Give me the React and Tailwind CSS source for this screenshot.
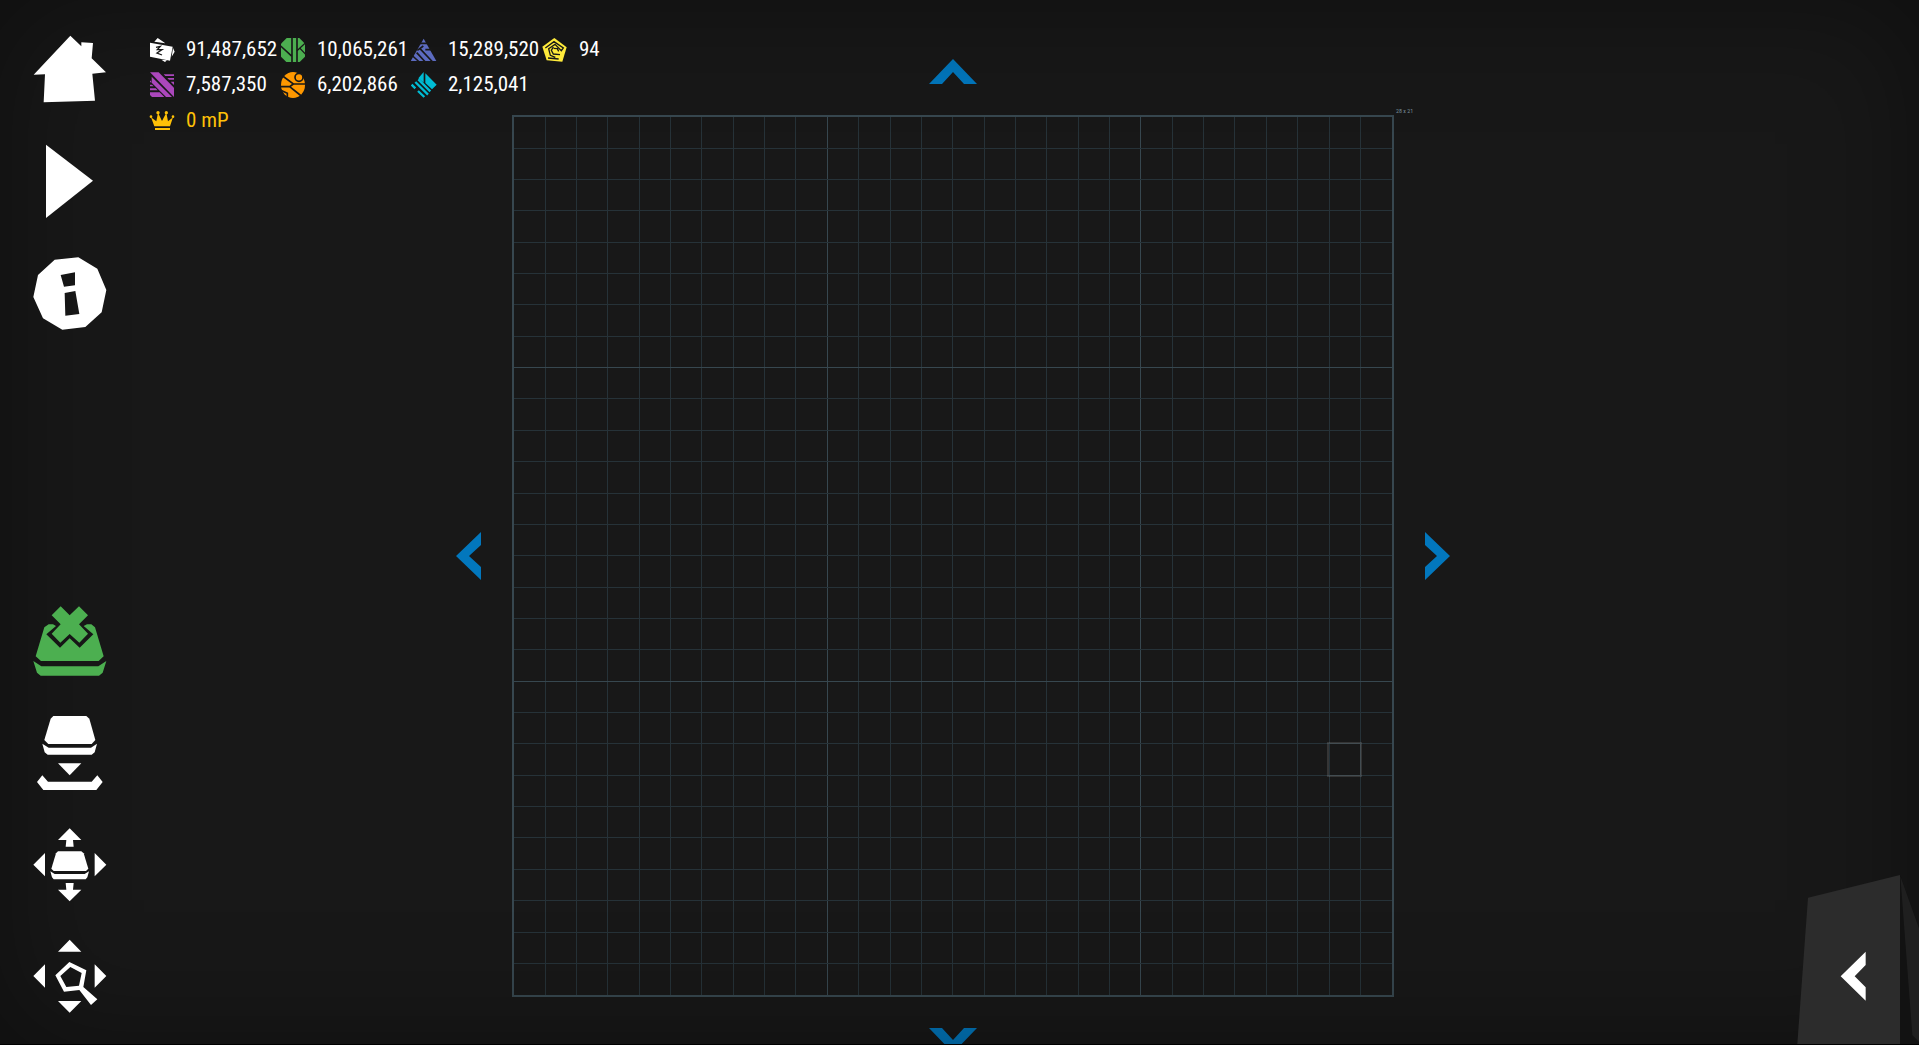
import React, { useState } from 'react';

const CELLS = 28;
const BG = '#181818';

// Resource icons
const BillsIcon = () => (
    <svg className="size-[26px] shrink-0" viewBox="27 33 78 78" aria-hidden="true">
        <path fill="#fff" d="M43 47L53 36L76 52Z M99 66L104 77L95 92Z M64 101L75 108L81 103Z" />
        <path fill="#fff" d="M30 50L98 62L90 104L30 92Z" />
        <path fill="none" stroke={BG} strokeWidth="4" d="M48 64L61 61L52 71L66 71L51 81L66 87" />
    </svg>
);

const VectorIcon = () => (
    <svg className="size-[26px] shrink-0" viewBox="420 33 78 78" aria-hidden="true">
        <path fill="#4caf50" d="M440 36H478L495 53V92L479 108H439L423 92V53Z" />
        <path fill="none" stroke={BG} strokeWidth="5" d="M456 33V111M471 33V111M422 60L456 91" />
        <path fill="none" stroke={BG} strokeWidth="4" d="M471 74L497 50M480 67L497 85" />
    </svg>
);

const ScalarIcon = () => (
    <svg className="size-[26px] shrink-0" viewBox="123 33 78 78" aria-hidden="true">
        <path fill="#5c6bc0" d="M161 38L199 105H122Z" />
        <path fill="none" stroke={BG} strokeWidth="5" d="M148 52H172M142 73L160 60M166 71H186M140 80L166 108M150 68L188 108M128 90L148 108" />
    </svg>
);

const SpiralIcon = () => (
    <svg className="size-[26px] shrink-0" viewBox="516 33 78 78" aria-hidden="true">
        <path fill="#ffeb3b" d="M553 36L590 64L577 107L530 103L517 62Z" />
        <path fill="none" stroke={BG} strokeWidth="4" d="M526 66L552 47L580 66L574 74L555 55L536 68L541 88L556 94M551 67L562 68L566 76M550 63L544 73L550 84L570 86M534 96L566 99" />
    </svg>
);

const TensorIcon = () => (
    <svg className="size-[26px] shrink-0" viewBox="27 138 78 78" aria-hidden="true">
        <g fill="#ab47bc">
            <path d="M30 139H56L102 185V213Z" />
            <path d="M35 152L96 213H78L35 170Z" />
            <path d="M71 145H102V150H76Z M82 156H102V161H87Z M92 167H102V177Z" />
            <path d="M30 163V169H35Z M30 176H36L41 181H30Z M30 187H47L53 193H30Z M30 199H59L73 213H36L30 207Z" />
        </g>
    </svg>
);

const CircuitIcon = () => (
    <svg className="size-[26px] shrink-0" viewBox="420 138 78 78" aria-hidden="true">
        <ellipse cx="459" cy="177" rx="36" ry="39" fill="#ff9800" />
        <circle cx="477" cy="154" r="12" fill="#ff9800" stroke={BG} strokeWidth="5" />
        <path fill="none" stroke={BG} strokeWidth="5" d="M428 150L460 174H498M460 174L449 182H421M449 182L484 210M421 192L442 202V216" />
    </svg>
);

const PrismIcon = () => (
    <svg className="size-[26px] shrink-0" viewBox="123 138 78 78" aria-hidden="true">
        <path fill="#00bcd4" d="M161 138V170L145 157Z M166 142L200 176L186 190L166 171Z" />
        <path fill="none" stroke="#00bcd4" strokeWidth="7" d="M145 160L181 196M136 168L174 206M125 176L136 187M144 195L163 213" />
    </svg>
);

const CrownIcon = () => (
    <svg className="size-[26px] shrink-0" viewBox="27 243 78 78" aria-hidden="true">
        <path fill="#ffc107" d="M43 298L33 271L49 283L54 257L66 282L79 257L84 283L99 271L90 298Z M45 303H90V309H45Z" />
        <g fill="#ffc107">
            <circle cx="33" cy="269" r="4" />
            <circle cx="54" cy="257" r="5" />
            <circle cx="79" cy="257" r="5" />
            <circle cx="99" cy="269" r="4" />
        </g>
    </svg>
);

const resources = [
    { name: 'Bits', value: '91,487,652', Icon: BillsIcon },
    { name: 'Vectors', value: '10,065,261', Icon: VectorIcon },
    { name: 'Scalars', value: '15,289,520', Icon: ScalarIcon },
    { name: 'Spirals', value: '94', Icon: SpiralIcon },
    { name: 'Tensors', value: '7,587,350', Icon: TensorIcon },
    { name: 'Circuits', value: '6,202,866', Icon: CircuitIcon },
    { name: 'Prisms', value: '2,125,041', Icon: PrismIcon },
];

function Resources() {
    return (
        <div className="absolute left-[149px] top-8 z-20 flex flex-col gap-px text-[21px] leading-[35px] text-white font-['Roboto_Condensed','Liberation_Sans_Narrow',Roboto,sans-serif]">
            <ul className="grid grid-cols-[repeat(4,131px)]">
                {resources.map(({ name, value, Icon }) => (
                    <li key={name} title={name} className="flex h-[35px] items-center gap-[11px] whitespace-nowrap">
                        <Icon />
                        <span>{value}</span>
                    </li>
                ))}
            </ul>
            <div className="flex h-[35px] items-center gap-[11px] text-[#ffc107]">
                <CrownIcon />
                <span>0 mP</span>
            </div>
        </div>
    );
}

// Sidebar buttons
function ToolButton({ label, viewBox, color = '#fff', onClick, children }) {
    return (
        <button type="button" aria-label={label} onClick={onClick} className="size-20 cursor-pointer">
            <svg className="size-full" viewBox={viewBox} fill={color}>
                {children}
            </svg>
        </button>
    );
}

function Sidebar({ removing, onToggleRemove }) {
    return (
        <nav className="relative z-20 flex w-[140px] shrink-0 flex-col items-center justify-between pt-[30px] pb-[27px]">
            <div className="flex flex-col gap-8">
                <ToolButton label="Home" viewBox="90 60 240 240">
                    <path d="M211 77L244 109V97L279 99L275 145L318 187L277 191L285 272L131 277L135 193L101 194Z" />
                </ToolButton>
                <ToolButton label="Play" viewBox="90 396 240 240">
                    <path d="M138 404L279 512L138 624Z" />
                </ToolButton>
                <ToolButton label="Info" viewBox="90 732 240 240">
                    <path
                        fillRule="evenodd"
                        d="M164 749L235 742L292 776L319 840L305 907L256 951L187 959L129 925L100 861L114 795Z M182 795L225 787V826L192 830Z M194 849L226 843L238 912L196 917Z"
                    />
                </ToolButton>
            </div>
            <div className="flex flex-col gap-8">
                <ToolButton
                    label="Remove"
                    viewBox="90 33 240 240"
                    color={removing ? '#4caf50' : '#fff'}
                    onClick={onToggleRemove}
                >
                    <path d="M182 49L209 76L237 49L264 76L237 103L264 131L238 158L209 132L181 158L155 131L182 103L155 76Z" />
                    <path d="M146 103H159L168 108L139 133L180 173L209 145L239 173L280 133L251 108L261 103H274L285 112L311 199L296 213H123L107 199L133 112Z" />
                    <path d="M100 213L124 229H295L319 213L308 248L297 257H122L111 248Z" />
                </ToolButton>
                <ToolButton label="Place" viewBox="90 369 240 240">
                    <path d="M160 378H259L268 386L286 450L275 462H145L133 450L152 386Z" />
                    <path d="M127 461L146 473H273L291 461L284 487L275 494H143L134 487Z" />
                    <path d="M174 520H244L209 556Z" />
                    <path d="M127 556L144 575H275L292 556L308 576L289 600H130L111 576Z" />
                </ToolButton>
                <ToolButton label="Move" viewBox="90 45 240 240">
                    <path d="M209 55L244 90H219L221 110H197L199 90H174Z" />
                    <path d="M209 274L244 239H219L221 219H197L199 239H174Z" />
                    <path d="M100 164L135 129V199Z M319 164L284 129V199Z" />
                    <path d="M174 124H244L251 130L265 176L258 183H161L154 176L168 130Z" />
                    <path d="M151 184L164 192H254L267 184L262 202L257 208H161L156 202Z" />
                </ToolButton>
                <ToolButton label="Zoom" viewBox="90 381 240 240">
                    <path d="M209 389L244 425H174Z M209 608L244 573H174Z" />
                    <path d="M100 498L135 463V533Z M319 498L284 463V533Z" />
                    <path
                        fillRule="evenodd"
                        d="M208 456L259 481L250 531L292 568L273 585L238 540L192 545L166 496Z M211 471L181 498L199 531L237 527L245 489Z"
                    />
                </ToolButton>
            </div>
        </nav>
    );
}

// Blue arrows around the field
const arrows = {
    up: { size: 'h-[25px] w-12', viewBox: '0 0 48 25', d: 'M24 0L48 25H35L24 13L13 25H0Z' },
    down: { size: 'h-[25px] w-12', viewBox: '0 0 48 25', d: 'M24 25L48 0H35L24 12L13 0H0Z' },
    left: { size: 'h-12 w-[25px]', viewBox: '0 0 25 48', d: 'M0 24L25 0V13L13 24L25 35V48Z' },
    right: { size: 'h-12 w-[25px]', viewBox: '0 0 25 48', d: 'M25 24L0 0V13L12 24L0 35V48Z' },
};

function Arrow({ direction }) {
    const { size, viewBox, d } = arrows[direction];

    return (
        <button type="button" aria-label={`Expand ${direction}`} className="shrink-0 cursor-pointer">
            <svg className={size} viewBox={viewBox}>
                <path fill="#0277bd" d={d} />
            </svg>
        </button>
    );
}

function Field() {
    const lines = Array.from({ length: CELLS - 1 }, (_, i) => i + 1);
    const pos = (i) => Math.round((i * 878) / CELLS + 1.25) + 0.5;

    return (
        <div className="relative aspect-square h-[calc(100vh-163px)] shrink-0">
            <svg className="size-full" viewBox="0 0 882 882" fill="none" shapeRendering="crispEdges">
                {lines.map((i) => (
                    <path key={`v${i}`} stroke={i % 10 === 0 ? '#37474f' : '#263238'} d={`M${pos(i)} 0V882`} />
                ))}
                {/* rows are counted from the bottom */}
                {lines.map((i) => (
                    <path key={`h${i}`} stroke={(CELLS - i) % 10 === 0 ? '#37474f' : '#263238'} d={`M0 ${pos(i)}H882`} />
                ))}
                <rect x="1" y="1" width="880" height="880" stroke="#37474f" strokeWidth="2" />
                <rect x="816" y="628" width="33" height="33" stroke="#fff" strokeOpacity="0.13" strokeWidth="2" />
            </svg>
            <span className="absolute bottom-full left-full whitespace-nowrap pl-0.5 text-[6px] leading-[8px] text-[#78909c] font-['Roboto_Condensed',Roboto,sans-serif]">
                28 x 21
            </span>
        </div>
    );
}

function App() {
    const [removing, setRemoving] = useState(true);
    const [panelOpen, setPanelOpen] = useState(false);

    return (
        <div className="relative flex h-screen overflow-hidden border-b border-black bg-[#181818]">
            <Sidebar removing={removing} onToggleRemove={() => setRemoving(!removing)} />
            <Resources />

            <main className="flex min-w-0 flex-1 flex-col items-center gap-[31px] pt-[59px] pr-[153px]">
                <Arrow direction="up" />
                <div className="flex items-center gap-[31px]">
                    <Arrow direction="left" />
                    <Field />
                    <Arrow direction="right" />
                </div>
                <Arrow direction="down" />
            </main>

            {/* Vignette */}
            <div className="pointer-events-none absolute inset-0 z-10 shadow-[inset_0_0_120px_rgba(0,0,0,0.4)]" />

            <button
                type="button"
                aria-label="Open panel"
                aria-expanded={panelOpen}
                onClick={() => setPanelOpen(!panelOpen)}
                className="absolute right-0 bottom-0 z-20 cursor-pointer"
            >
                <svg className="h-[169px] w-[122px]" viewBox="231 75 366 507">
                    <path fill="#121212" d="M540 75L597 235V582H540Z" />
                    <path fill="#1f1f1f" d="M541 78L597 235V575L577 555Z" />
                    <path fill="#2c2c2c" d="M264 143L540 75V582H232Z" />
                    <path fill="#fff" d="M362 379L437 305V345L404 379L437 412V452Z" />
                </svg>
            </button>
            <div className="absolute -bottom-px left-[35%] z-20 h-px w-18 bg-[#333]" />
        </div>
    );
}

export default App;
